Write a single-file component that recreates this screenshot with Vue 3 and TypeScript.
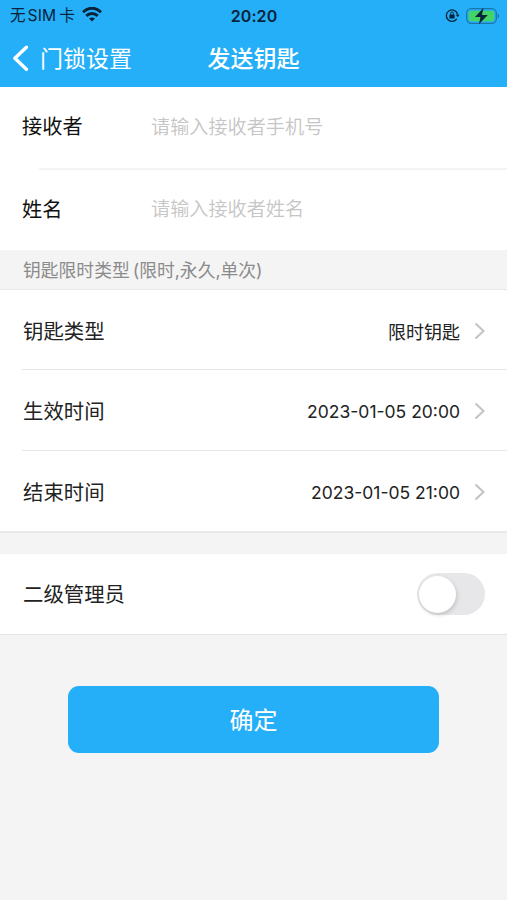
<script setup lang="ts">
import { ref } from 'vue'

interface Field { label: string; placeholder: string; value: string }
interface Setting { label: string; value: string; numeric: boolean }

const fields = ref<Field[]>([
  { label: '接收者', placeholder: '请输入接收者手机号', value: '' },
  { label: '姓名', placeholder: '请输入接收者姓名', value: '' },
])
const settings: Setting[] = [
  { label: '钥匙类型', value: '限时钥匙', numeric: false },
  { label: '生效时间', value: '2023-01-05 20:00', numeric: true },
  { label: '结束时间', value: '2023-01-05 21:00', numeric: true },
]
const isAdmin = ref(false)
</script>

<template>
  <main class="screen">
    <header class="header">
      <div class="status">
        <div class="carrier">
          <span class="carrier-name">无<span class="sim">SIM</span>卡</span>
          <svg class="wifi" width="20" height="15" viewBox="0 0 20 15" fill="none" stroke="#08243a" stroke-width="3">
            <path d="M1 5.3C6-.1 14-.1 19 5.3" />
            <path d="M4.3 8.9c3.2-3.3 8.2-3.3 11.4 0" />
            <path d="M7 11.6c1.7-1.6 4.3-1.6 6 0L10 14.6z" fill="#08243a" stroke="none" />
          </svg>
        </div>
        <span class="clock">20:20</span>
        <div class="indicators">
          <svg width="15" height="15" viewBox="0 0 15 15" fill="none">
            <path d="M11.8 10.8A5.7 5.7 0 1 1 12.5 6" stroke="#08243a" stroke-width="1.3" />
            <path d="M10.7 6.4h4l-2 2.8z" fill="#08243a" />
            <rect x="4.4" y="6.5" width="5.2" height="4" rx=".6" fill="#08243a" />
            <path d="M5.6 6.8V5.4a1.4 1.4 0 0 1 2.8 0v1.4" stroke="#08243a" />
          </svg>
          <svg width="34" height="18" viewBox="0 0 34 18">
            <rect x=".7" y="1.7" width="29.6" height="14.6" rx="4.6" fill="none" stroke="#1b75a9" stroke-width="1.2" />
            <rect x="2.7" y="3.7" width="25.6" height="10.6" rx="2.7" fill="#43d467" />
            <path d="M31.6 6.5c2 .8 2 4.2 0 5z" fill="#1b75a9" />
            <path d="M17.6.8 9 10.1h5.5l-1.6 7.1L21.8 7.9h-5.9z" fill="#08243a" />
          </svg>
        </div>
      </div>
      <nav class="nav">
        <a class="back">
          <svg width="17" height="28" viewBox="0 0 17 28" fill="none" stroke="#fff" stroke-width="3.4" stroke-linecap="round" stroke-linejoin="round">
            <path d="M14.4 2.2 2.9 13.2l11.5 11" />
          </svg>
          <span>门锁设置</span>
        </a>
        <h1 class="title">发送钥匙</h1>
      </nav>
    </header>

    <section class="fields">
      <label v-for="field in fields" :key="field.label" class="field">
        <span class="field-label">{{ field.label }}</span>
        <input v-model="field.value" class="input" :placeholder="field.placeholder" />
      </label>
    </section>

    <h2 class="caption">钥匙限时类型<span class="types">(限时,永久,单次)</span></h2>

    <section class="settings">
      <div v-for="item in settings" :key="item.label" class="setting">
        <span class="label">{{ item.label }}</span>
        <span class="value" :class="{ numeric: item.numeric }">{{ item.value }}</span>
        <svg width="12" height="18" viewBox="0 0 12 18" fill="none" stroke="#c4c4c6" stroke-width="2.1">
          <path d="m1.5 1.5 8 7.5-8 7.5" />
        </svg>
      </div>
    </section>

    <section class="admin">
      <span class="label">二级管理员</span>
      <button class="switch" :class="{ on: isAdmin }" role="switch" :aria-checked="isAdmin" @click="isAdmin = !isAdmin">
        <span class="knob"></span>
      </button>
    </section>

    <button class="submit">确定</button>
  </main>
</template>

<style>
body { background: #f4f4f4; }
</style>

<style scoped>
.screen {
  display: flex;
  flex-direction: column;
  min-height: 900px;
  background: #f4f4f4;
  color: #222;
  font-family: Inter, "Noto Sans CJK SC", sans-serif;
}
.header { height: 87px; background: #25aff9; }
.status {
  display: grid;
  grid-template-columns: 1fr auto 1fr;
  align-items: center;
  height: 30px;
  padding: 0 7px 0 10px;
  color: #08243a;
}
.carrier { display: flex; align-items: center; gap: 7px; }
.carrier-name { padding-top: 1px; font-size: 15.6px; line-height: 30px; white-space: nowrap; }
.sim { margin: 0 3px 0 2px; letter-spacing: 0.1px; }
.clock { padding-right: 2px; font-size: 16px; font-weight: 600; letter-spacing: 0.1px; }
.indicators { display: flex; justify-content: flex-end; align-items: center; gap: 6px; }
.wifi { margin-bottom: 2px; }
.nav {
  display: grid;
  grid-template-columns: 1fr auto 1fr;
  align-items: center;
  height: 57px;
  padding: 0 12px;
  color: #fff;
}
.back { display: flex; align-items: center; gap: 11px; font-size: 23px; line-height: 56px; }
.title { margin: 0; font-size: 23px; line-height: 56px; font-weight: 500; }
.fields { background: #fff; }
.field { display: flex; align-items: center; height: 81px; padding-left: 22px; }
.field + .field {
  border-top: 2px solid transparent;
  border-image: linear-gradient(to right, #fff 40px, #f4f4f4 40px) 1;
  height: 80px;
}
.field-label { width: 129px; padding-bottom: 4px; font-size: 20.2px; color: #111; }
.input {
  flex: 1;
  min-width: 0;
  padding: 0 0 2px;
  border: 0;
  outline: 0;
  background: none;
  font: inherit;
  font-size: 19.15px;
}
.input::placeholder { color: #c6c6c6; opacity: 1; font-weight: 350; }
.caption {
  box-sizing: border-box;
  height: 40px;
  margin: 0;
  padding: 1px 0 0 23px;
  border-bottom: 1px solid #e7e7e7;
  font-size: 17.8px;
  line-height: 40px;
  font-weight: 400;
  color: #8b8b8b;
}
.types { margin-left: 3px; }
.settings { padding-left: 22px; background: #fff; border-bottom: 2px solid #e9e9e9; }
.setting {
  display: flex;
  align-items: center;
  height: 78px;
  padding: 2px 21px 0 0;
  border-bottom: 1px solid #e7e7e7;
}
.setting:first-child { height: 77px; }
.setting:last-child { border-bottom: 0; }
.label { flex: 1; padding: 0 0 2px 1px; font-size: 20.4px; }
.value { margin-right: 14px; font-size: 18px; }
.numeric { font-size: 17.5px; }
.admin {
  display: flex;
  align-items: center;
  height: 80px;
  margin-top: 21px;
  padding: 0 22px;
  background: #fff;
  border-bottom: 1px solid #e5e5e5;
}
.switch {
  display: flex;
  align-items: center;
  width: 68px;
  height: 42px;
  padding: 0 2px;
  border: 0;
  border-radius: 21px;
  background: #e7e7e9;
}
.switch.on { justify-content: flex-end; background: #25aff9; }
.knob {
  width: 37px;
  height: 37px;
  border-radius: 50%;
  background: #fff;
  box-shadow: 1px 2px 4px rgba(0, 0, 0, 0.16);
}
.submit {
  height: 67px;
  margin: 51px 68px 0;
  padding: 0 0 2px;
  border: 0;
  border-radius: 11px;
  background: #25aff9;
  color: #fff;
  font: inherit;
  font-size: 24px;
}
</style>
